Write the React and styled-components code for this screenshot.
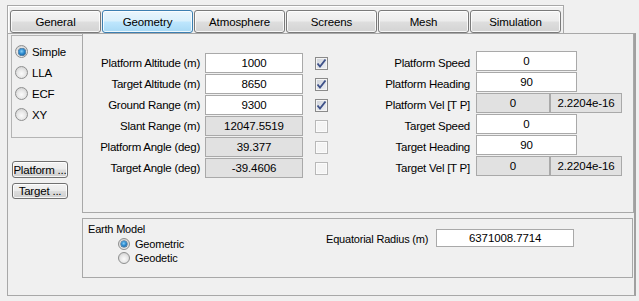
import React from "react";
import styled, { createGlobalStyle, css } from "styled-components";

const Global = createGlobalStyle`
  html, body { margin: 0; padding: 0; background: #f0f0f0; }
  body { font-family: "Liberation Sans", Arial, sans-serif; font-size: 11px; color: #000; }
  * { box-sizing: border-box; }
`;

const Root = styled.div`
  width: 639px;
  height: 301px;
  padding: 5px 0 0 7px;
  background: #f0f0f0;
  overflow: hidden;
`;

const TabStrip = styled.div`
  width: 557px;
  height: 28px;
  border: 1px solid #a8a8a8;
  border-bottom: none;
  box-shadow: inset 1px 1px 0 #fff;
  padding: 4px 0 0 2px;
  display: flex;
  gap: 1px;
`;

const Tab = styled.div`
  width: 91px;
  height: 23px;
  border: 1px solid #7a7a7a;
  border-radius: 3px;
  display: flex;
  align-items: center;
  justify-content: center;
  font-size: 11.5px;
  letter-spacing: -0.1px;
  box-shadow: inset 0 0 0 1px rgba(255, 255, 255, 0.8);
  background: linear-gradient(#f4f4f4 0%, #ececec 48%, #dedede 52%, #d3d3d3 100%);
  ${(p) =>
    p.$active &&
    css`
      border-color: #3c7fb1;
      background: linear-gradient(#eaf6fd 0%, #d9f0fc 48%, #bee6fd 52%, #a7d9f5 100%);
    `}
`;

const Panel = styled.div`
  width: 629px;
  height: 263px;
  border: 1px solid #a8a8a8;
  border-right: 2px solid #a0a0a0;
  display: flex;
`;

const LeftCol = styled.div`
  width: 74px;
  display: flex;
  flex-direction: column;
`;

const RadioBox = styled.div`
  margin: 1px 0 0 3px;
  width: 71px;
  height: 103px;
  border: 1px solid #b4b4b4;
  border-right: none;
  padding: 5px 0 0 3px;
  display: flex;
  flex-direction: column;
`;

const RadioRow = styled.label`
  height: ${(p) => p.$h || 21}px;
  display: flex;
  align-items: center;
  gap: ${(p) => p.$gap || 4}px;
  font-size: ${(p) => p.$fs || 11.5}px;
  letter-spacing: -0.2px;
`;

const RadioDot = styled.span`
  position: relative;
  width: ${(p) => p.$size}px;
  height: ${(p) => p.$size}px;
  border-radius: 50%;
  border: 1px solid #8e8f8f;
  background: radial-gradient(circle at 50% 60%, #fbfbfb 0%, #e8e8e8 45%, #c8c8c8 100%);
  flex: none;
  ${(p) =>
    p.$checked &&
    css`
      &::after {
        content: "";
        position: absolute;
        left: 50%;
        top: 50%;
        width: ${p.$size - 6}px;
        height: ${p.$size - 6}px;
        transform: translate(-50%, -50%);
        border-radius: 50%;
        background: radial-gradient(circle at 45% 40%, #8ad0f6 0%, #2d8bd0 45%, #124a7c 100%);
        box-shadow: 0 0 0 0.5px #1b4a74;
      }
    `}
`;

const SideButton = styled.div`
  margin: ${(p) => p.$top}px 0 0 4px;
  width: 56px;
  height: ${(p) => p.$h}px;
  border: 1px solid #707070;
  border-radius: 3px;
  box-shadow: inset 0 0 0 1px rgba(255, 255, 255, 0.8);
  background: linear-gradient(#f2f2f2 0%, #ebebeb 48%, #dddddd 52%, #cfcfcf 100%);
  display: flex;
  align-items: center;
  justify-content: center;
  font-size: 11.5px;
  letter-spacing: -0.2px;
  white-space: nowrap;
`;

const RightCol = styled.div`
  width: 553px;
  display: flex;
  flex-direction: column;
`;

const FieldsPanel = styled.div`
  width: 552px;
  height: 179px;
  border: 1px solid #a8a8a8;
  border-top: none;
  display: flex;
`;

const FieldGrid = styled.div`
  display: grid;
  grid-template-columns: ${(p) => p.$cols};
  column-gap: ${(p) => p.$gap}px;
  grid-auto-rows: 20px;
  row-gap: 1px;
  padding-top: ${(p) => p.$top}px;
  align-content: start;
`;

const Label = styled.div`
  display: flex;
  align-items: center;
  justify-content: flex-end;
  padding-right: ${(p) => p.$pr || 0}px;
  padding-top: ${(p) => p.$pt || 0}px;
  font-size: 11.5px;
  letter-spacing: -0.25px;
  white-space: nowrap;
`;

const Field = styled.div`
  width: ${(p) => p.$w}px;
  height: ${(p) => p.$h || 20}px;
  border: 1px solid #a9a9a9;
  background: ${(p) => (p.$ro ? "#e1e1e1" : "#ffffff")};
  display: flex;
  align-items: center;
  justify-content: center;
  font-size: 11.5px;
  letter-spacing: -0.1px;
`;

const Pair = styled.div`
  display: flex;
`;

const CheckCell = styled.div`
  display: flex;
  align-items: center;
  padding-left: 7px;
`;

const Check = styled.span`
  width: 13px;
  height: 13px;
  border: 1px solid ${(p) => (p.$checked ? "#8a8a8a" : "#b8b8b8")};
  background: ${(p) =>
    p.$checked ? "linear-gradient(135deg, #cfd3da 0%, #eef0f4 100%)" : "#f4f4f4"};
  box-shadow: inset 0 0 0 1px ${(p) => (p.$checked ? "#f4f4f4" : "#fbfbfb")};
  display: flex;
  align-items: center;
  justify-content: center;
  svg { display: block; }
`;

const EarthBox = styled.div`
  margin-top: 5px;
  width: 551px;
  height: 60px;
  border: 1px solid #a8a8a8;
  padding: 4px 0 0 5px;
  display: flex;
`;

const EarthLeft = styled.div`
  width: 238px;
  display: flex;
  flex-direction: column;
`;

const Title = styled.div`
  height: 14px;
  font-size: 11px;
  letter-spacing: -0.2px;
`;

const EarthRadios = styled.div`
  margin: 0 0 0 30px;
  display: flex;
  flex-direction: column;
`;

const EarthRight = styled.div`
  display: flex;
  align-items: flex-start;
  gap: 8px;
  padding-top: 6px;
`;

const EqLabel = styled.div`
  padding-top: 4px;
  font-size: 11px;
  letter-spacing: -0.2px;
`;

function CheckBox({ checked }) {
  return (
    <Check $checked={checked}>
      {checked && (
        <svg width="11" height="11" viewBox="0 0 11 11">
          <path d="M1.5 5.5 L4 8.5 L9.5 1.5" fill="none" stroke="#3e5189" strokeWidth="1.9" />
        </svg>
      )}
    </Check>
  );
}

const tabs = ["General", "Geometry", "Atmosphere", "Screens", "Mesh", "Simulation"];
const modes = ["Simple", "LLA", "ECF", "XY"];

const midRows = [
  { label: "Platform Altitude (m)", value: "1000", ro: false, checked: true },
  { label: "Target Altitude (m)", value: "8650", ro: false, checked: true },
  { label: "Ground Range (m)", value: "9300", ro: false, checked: true },
  { label: "Slant Range (m)", value: "12047.5519", ro: true, checked: false },
  { label: "Platform Angle (deg)", value: "39.377", ro: true, checked: false },
  { label: "Target Angle (deg)", value: "-39.4606", ro: true, checked: false, pr: -4 },
];

const rightRows = [
  { label: "Platform Speed", value: "0" },
  { label: "Platform Heading", value: "90" },
  { label: "Platform Vel [T P]", pair: ["0", "2.2204e-16"] },
  { label: "Target Speed", value: "0" },
  { label: "Target Heading", value: "90" },
  { label: "Target Vel [T P]", pair: ["0", "2.2204e-16"] },
];

export default function App() {
  return (
    <Root>
      <Global />
      <TabStrip>
        {tabs.map((t) => (
          <Tab key={t} $active={t === "Geometry"}>
            {t}
          </Tab>
        ))}
      </TabStrip>
      <Panel>
        <LeftCol>
          <RadioBox>
            {modes.map((m, i) => (
              <RadioRow key={m}>
                <RadioDot $size={13} $checked={i === 0} />
                {m}
              </RadioRow>
            ))}
          </RadioBox>
          <SideButton $top={23} $h={17}>Platform ...</SideButton>
          <SideButton $top={5} $h={16}>Target ...</SideButton>
        </LeftCol>
        <RightCol>
          <FieldsPanel>
            <FieldGrid $cols="117px 98px 26px" $gap={5} $top={19}>
              {midRows.map((r) => (
                <React.Fragment key={r.label}>
                  <Label $pr={r.pr}>{r.label}</Label>
                  <Field $w={98} $ro={r.ro}>{r.value}</Field>
                  <CheckCell>
                    <CheckBox checked={r.checked} />
                  </CheckCell>
                </React.Fragment>
              ))}
            </FieldGrid>
            <FieldGrid $cols="136px 146px" $gap={6} $top={17}>
              {rightRows.map((r) => (
                <React.Fragment key={r.label}>
                  <Label $pt={3}>{r.label}</Label>
                  {r.pair ? (
                    <Pair>
                      <Field $w={74} $ro>{r.pair[0]}</Field>
                      <Field $w={72} $ro>{r.pair[1]}</Field>
                    </Pair>
                  ) : (
                    <Field $w={101}>{r.value}</Field>
                  )}
                </React.Fragment>
              ))}
            </FieldGrid>
          </FieldsPanel>
          <EarthBox>
            <EarthLeft>
              <Title>Earth Model</Title>
              <EarthRadios>
                <RadioRow $h={14} $gap={5} $fs={11}>
                  <RadioDot $size={12} $checked />
                  Geometric
                </RadioRow>
                <RadioRow $h={14} $gap={5} $fs={11}>
                  <RadioDot $size={12} />
                  Geodetic
                </RadioRow>
              </EarthRadios>
            </EarthLeft>
            <EarthRight>
              <EqLabel>Equatorial Radius (m)</EqLabel>
              <Field $w={138} $h={18}>6371008.7714</Field>
            </EarthRight>
          </EarthBox>
        </RightCol>
      </Panel>
    </Root>
  );
}
